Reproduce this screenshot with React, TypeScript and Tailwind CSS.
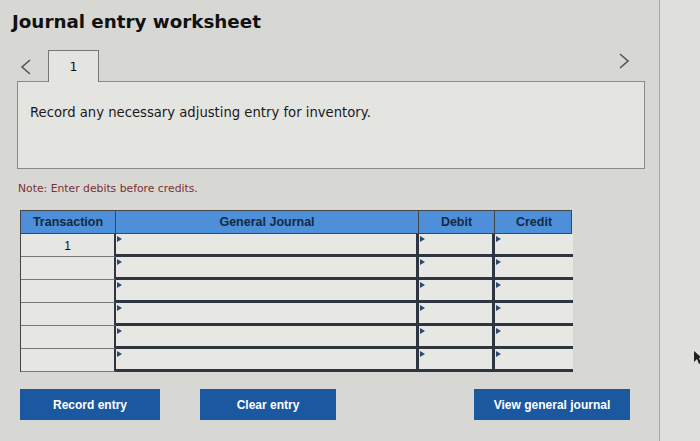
import React from "react";

const rows = [0, 1, 2, 3, 4, 5];

function Marker() {
  return (
    <span className="absolute left-[1px] top-[2px] h-0 w-0 border-y-[3px] border-l-[5px] border-y-transparent border-l-[#2b4a6e]" />
  );
}

export default function App() {
  return (
    <div className="flex h-[441px] w-[700px] overflow-hidden bg-[#d7d7d4]" style={{ fontFamily: '"DejaVu Sans", sans-serif' }}>
      <div className="flex w-[660px] shrink-0 flex-col border-r border-[#a9a9a6] pl-[12px] pt-[10px]">
        <h1 className="text-[18.3px] font-bold leading-[23px] text-[#111]">Journal entry worksheet</h1>

        <div className="relative mt-[17px] flex h-[31px] items-start">
          <svg className="ml-[8px] mt-[9px]" width="12" height="16" viewBox="0 0 12 16">
            <path d="M10 1 L2 8 L10 15" fill="none" stroke="#555" strokeWidth="1.6" />
          </svg>
          <div className="relative z-10 ml-[16px] flex h-[32px] w-[51px] items-start justify-center border border-b-0 border-[#777] bg-[#e4e4e1] pt-[7px] text-[12.5px] text-[#111]">
            1
          </div>
          <svg className="absolute left-[606px] top-[3px]" width="12" height="16" viewBox="0 0 12 16">
            <path d="M2 1 L10 8 L2 15" fill="none" stroke="#555" strokeWidth="1.6" />
          </svg>
        </div>

        <div className="ml-[5px] h-[88px] w-[628px] border border-[#8a8a88] bg-[#e4e4e1] pl-[12px] pt-[21px] text-[13.2px] text-[#1a1a1a]">
          Record any necessary adjusting entry for inventory.
        </div>

        <div className="ml-[6px] mt-[12px] text-[10.8px] text-[#7a3232]">Note: Enter debits before credits.</div>

        <div className="ml-[8px] mt-[13px] w-[552px] text-[12.5px]" style={{ fontFamily: '"Liberation Sans", Arial, sans-serif' }}>
          <div className="grid h-[24px] grid-cols-[95px_303px_76px_78px] border border-[#444] bg-[#4d8fd8] font-bold text-[#132a45]">
            <div className="flex items-center justify-center border-r border-[#444]">Transaction</div>
            <div className="flex items-center justify-center border-r border-[#444]">General Journal</div>
            <div className="flex items-center justify-center border-r border-[#444]">Debit</div>
            <div className="flex items-center justify-center">Credit</div>
          </div>
          <div className="grid grid-cols-[95px_303px_76px_78px] border-x border-[#444]">
            {rows.map((r) => (
              <React.Fragment key={r}>
                <div className="flex h-[23px] items-start justify-center border-b border-r-2 border-[#777] border-r-[#2e3540] bg-[#e6e6e3] pt-[3px] text-[12px] text-[#111]">
                  {r === 0 ? "1" : ""}
                </div>
                <div className="relative h-[23px] border-b-[3px] border-r-[3px] border-[#2e3540] bg-[#e7e7e4]">
                  <Marker />
                </div>
                <div className="relative h-[23px] border-b-[3px] border-r-[3px] border-[#2e3540] bg-[#e7e7e4]">
                  <Marker />
                </div>
                <div className="relative h-[23px] border-b-[3px] border-[#2e3540] bg-[#e7e7e4]">
                  <Marker />
                </div>
              </React.Fragment>
            ))}
          </div>
        </div>

        <div className="mt-[17px] flex items-center text-[12px] font-bold text-white" style={{ fontFamily: '"Liberation Sans", Arial, sans-serif' }}>
          <div className="ml-[8px] flex h-[31px] w-[140px] items-center justify-center bg-[#1b58a0]">Record entry</div>
          <div className="ml-[40px] flex h-[31px] w-[136px] items-center justify-center bg-[#1b58a0]">Clear entry</div>
          <div className="ml-[138px] flex h-[31px] w-[156px] items-center justify-center bg-[#1b58a0]">View general journal</div>
        </div>
      </div>
      <div className="relative flex-1 bg-[#dfdfdc]">
        <svg className="absolute left-[34px] top-[351px]" width="8" height="14" viewBox="0 0 8 14">
          <path d="M0 0 L0 11 L3 8 L5 13 L7 12 L5 7 L8 7 Z" fill="#222" />
        </svg>
      </div>
    </div>
  );
}
